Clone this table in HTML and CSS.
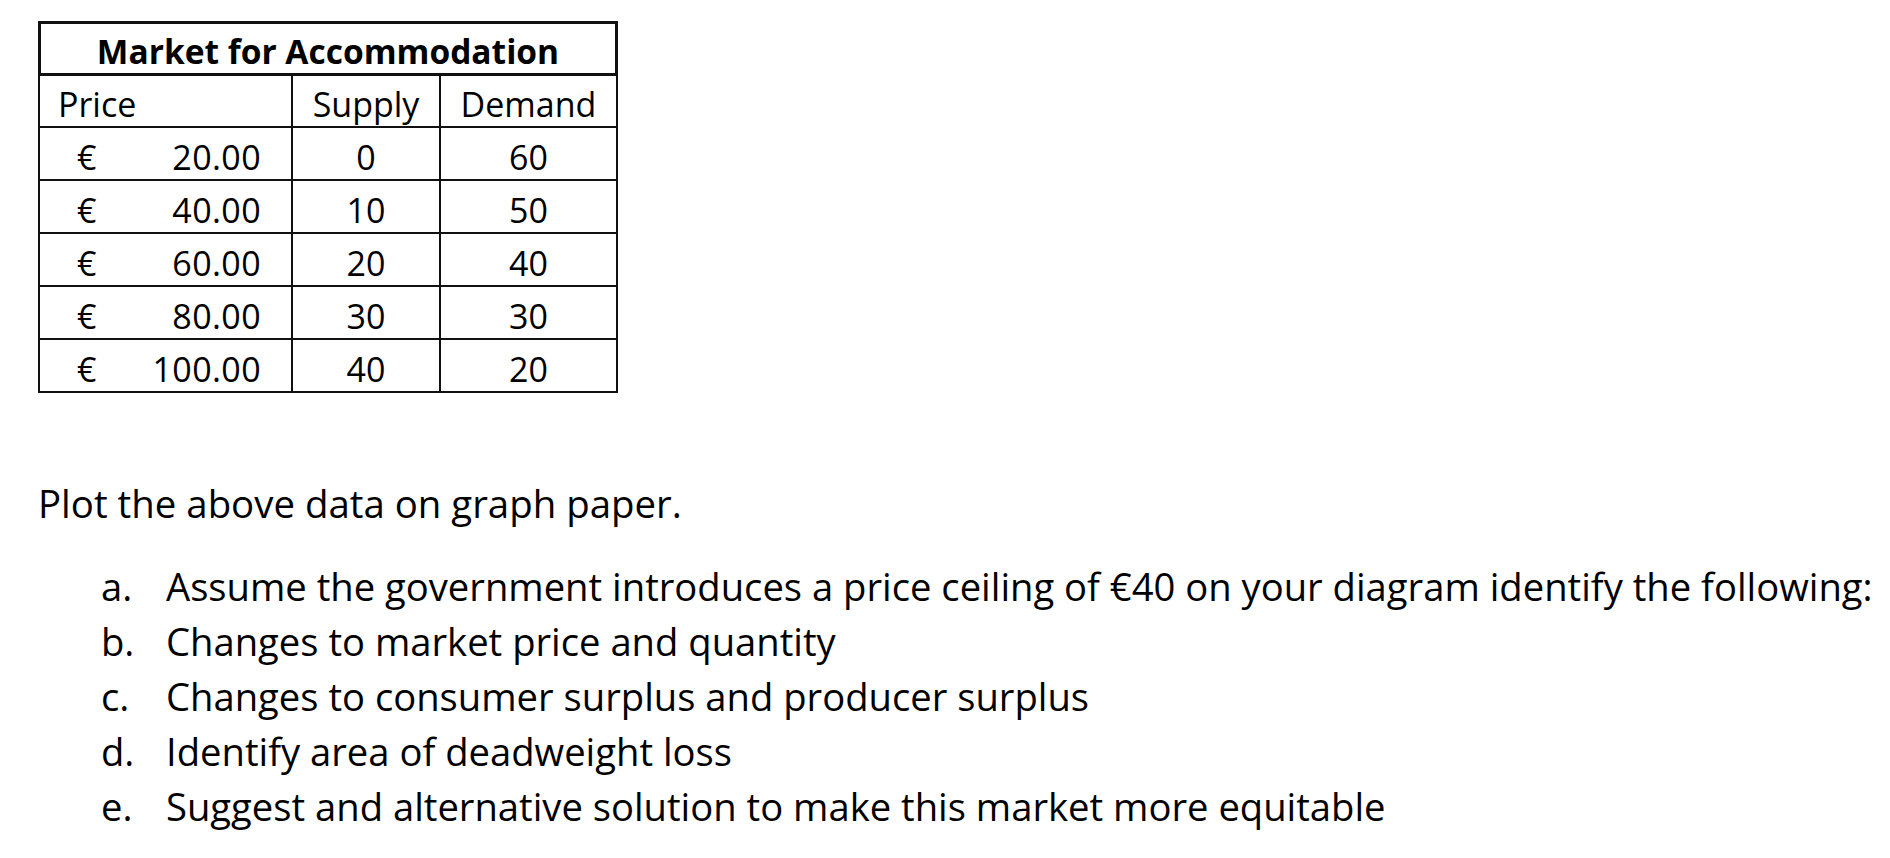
FILE: index.html
```html
<!DOCTYPE html>
<html lang="en">
<head>
<meta charset="utf-8">
<title>Market for Accommodation</title>
<link rel="stylesheet" href="styles.css">
</head>
<body>
<main class="sheet">
  <table class="market">
    <thead>
      <tr class="row-title">
        <th class="title" colspan="3">Market for Accommodation</th>
      </tr>
      <tr class="row-head">
        <th class="c1 h-price">Price</th>
        <th class="c2 h-center">Supply</th>
        <th class="c3 h-center">Demand</th>
      </tr>
    </thead>
    <tbody>
      <tr class="row-data">
        <td class="c1"><div class="price"><span class="cur">€</span><span class="amt">20.00</span></div></td>
        <td class="c2 num">0</td>
        <td class="c3 num">60</td>
      </tr>
      <tr class="row-data">
        <td class="c1"><div class="price"><span class="cur">€</span><span class="amt">40.00</span></div></td>
        <td class="c2 num">10</td>
        <td class="c3 num">50</td>
      </tr>
      <tr class="row-data">
        <td class="c1"><div class="price"><span class="cur">€</span><span class="amt">60.00</span></div></td>
        <td class="c2 num">20</td>
        <td class="c3 num">40</td>
      </tr>
      <tr class="row-data">
        <td class="c1"><div class="price"><span class="cur">€</span><span class="amt">80.00</span></div></td>
        <td class="c2 num">30</td>
        <td class="c3 num">30</td>
      </tr>
      <tr class="row-data">
        <td class="c1"><div class="price"><span class="cur">€</span><span class="amt">100.00</span></div></td>
        <td class="c2 num">40</td>
        <td class="c3 num">20</td>
      </tr>
    </tbody>
  </table>

  <p class="intro">Plot the above data on graph paper.</p>

  <ul class="tasks">
    <li class="task"><span class="mark">a.</span><span class="task-text">Assume the government introduces a price ceiling of €40 on your diagram identify the following:</span></li>
    <li class="task"><span class="mark">b.</span><span class="task-text">Changes to market price and quantity</span></li>
    <li class="task"><span class="mark">c.</span><span class="task-text">Changes to consumer surplus and producer surplus</span></li>
    <li class="task"><span class="mark">d.</span><span class="task-text">Identify area of deadweight loss</span></li>
    <li class="task"><span class="mark">e.</span><span class="task-text">Suggest and alternative solution to make this market more equitable</span></li>
  </ul>
</main>
</body>
</html>
```
FILE: styles.css
```css
html, body {
  background: #ffffff;
}

body {
  margin: 8px;
  color: #000000;
  font-family: "Open Sans", "Noto Sans", "Liberation Sans", sans-serif;
}

.sheet {
  margin-left: 30px;
  padding-top: 13px;
}

/* ---------- table ---------- */
.market {
  border-collapse: separate;
  border-spacing: 0;
  width: 580px;
  font-size: 34px;
  color: #000;
}

.market th,
.market td {
  box-sizing: border-box;
  padding: 0;
  font-weight: 400;
  vertical-align: bottom;
  line-height: 44px;
  white-space: nowrap;
}

.row-title { height: 55px; }
.row-head  { height: 52px; }
.row-data  { height: 53px; }

.title {
  border: 3px solid #111;
  font-weight: 700 !important;
  font-size: 33.5px;
  text-align: center;
}

.c1 {
  width: 255px;
  border-left: 2px solid #111;
  border-right: 2px solid #111;
  border-bottom: 2px solid #111;
}

.c2 {
  width: 148px;
  border-right: 2px solid #111;
  border-bottom: 2px solid #111;
}

.c3 {
  width: 177px;
  border-right: 2px solid #111;
  border-bottom: 2px solid #111;
}

.h-price {
  text-align: left;
  padding-left: 18px !important;
}

.h-center,
.num {
  text-align: center;
}

.price {
  display: flex;
  justify-content: space-between;
  padding: 0 30px 0 37px;
}

.amt {
  letter-spacing: 0.4px;
}

/* ---------- text ---------- */
.intro {
  margin: 83px 0 0;
  font-size: 38.4px;
  line-height: 55px;
}

.tasks {
  list-style: none;
  margin: 28px 0 0;
  padding: 0 0 0 63px;
  font-size: 38.2px;
  line-height: 55px;
}

.task {
  display: flex;
  white-space: nowrap;
}

.mark {
  flex: 0 0 65px;
}
```
